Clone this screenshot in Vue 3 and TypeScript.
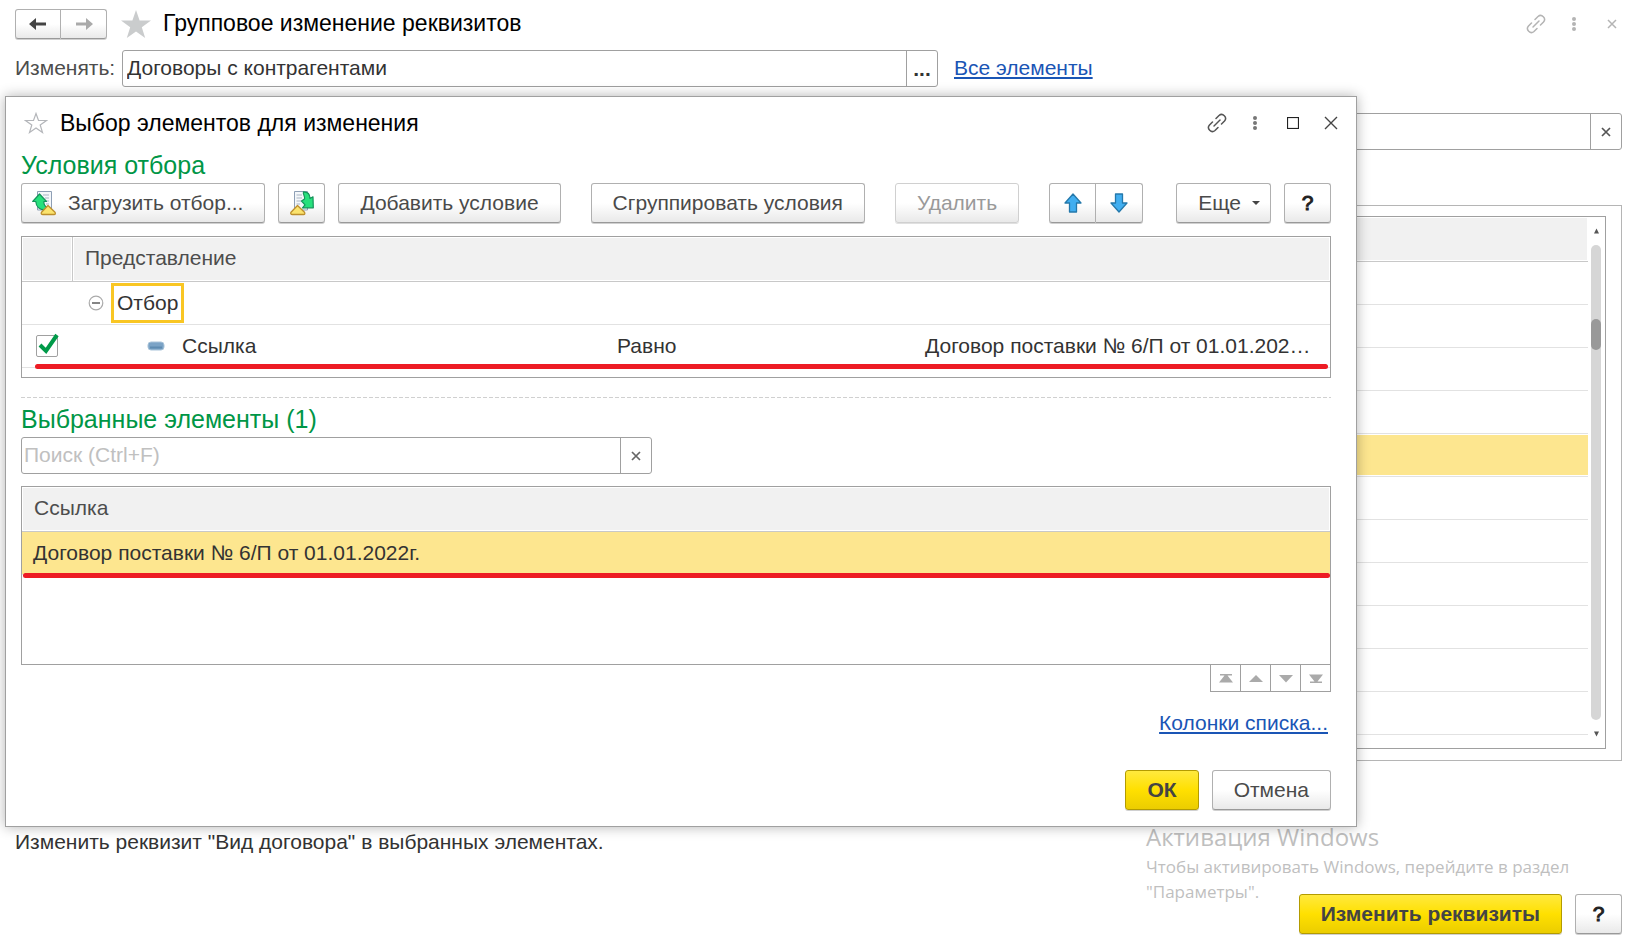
<script setup lang="ts">
import { ref } from 'vue'

const target = ref('Договоры с контрагентами')
const filterText = ref('')
const search = ref('')
const conditionOn = ref(true)
const backRows = Array.from({ length: 11 }, (_, i) => ({ id: i, selected: i === 4 }))
const selectedItems = ['Договор поставки № 6/П от 01.01.2022г.']
</script>

<template>
  <main class="page">
    <header class="topbar">
      <div class="btn-pair nav">
        <button class="btn" type="button" aria-label="Назад">
          <svg width="18" height="14" viewBox="0 0 18 14"><path d="M0 7 7 1V5.5H17V8.5H7V13Z" fill="#444" /></svg>
        </button>
        <button class="btn" type="button" aria-label="Вперед">
          <svg width="18" height="14" viewBox="0 0 18 14"><path d="M18 7 11 1V5.5H1V8.5H11V13Z" fill="#aaa" /></svg>
        </button>
      </div>
      <svg class="star" width="30" height="29" viewBox="0 0 30 29"><path d="M15 0 18.6 10.6H30L20.8 17.2 24.2 28 15 21.4 5.8 28 9.2 17.2 0 10.6H11.4Z" fill="#cacccd" /></svg>
      <h1 class="title">Групповое изменение реквизитов</h1>
      <div class="window-icons muted">
        <button type="button" aria-label="Ссылка на объект">
          <svg width="20" height="20" viewBox="0 0 20 20"><g fill="none" stroke="currentColor" stroke-width="1.5" stroke-linecap="round"><path d="M9 5.5 12 2.5A3.9 3.9 0 0 1 17.5 8L14.5 11" /><path d="M11 14.5 8 17.5A3.9 3.9 0 0 1 2.5 12L5.5 9" /><path d="M7 13 13 7" /></g></svg>
        </button>
        <button type="button" aria-label="Меню">
          <svg width="6" height="16" viewBox="0 0 6 16"><g fill="currentColor"><circle cx="3" cy="3" r="2" /><circle cx="3" cy="8" r="2" /><circle cx="3" cy="13" r="2" /></g></svg>
        </button>
        <button type="button" aria-label="Закрыть">
          <svg width="10" height="10" viewBox="0 0 10 10"><path d="M1 1 9 9M9 1 1 9" stroke="currentColor" stroke-width="1.5" /></svg>
        </button>
      </div>
    </header>

    <div class="target-row">
      <label for="target">Изменять:</label>
      <div class="field target-field">
        <input id="target" v-model="target" type="text" />
        <button type="button" aria-label="Выбрать"><b>...</b></button>
      </div>
      <a href="#">Все элементы</a>
    </div>

    <div class="field filter-field">
      <input v-model="filterText" type="text" aria-label="Фильтр" />
      <button type="button" aria-label="Очистить">
        <svg width="10" height="10" viewBox="0 0 10 10"><path d="M1 1 9 9M9 1 1 9" stroke="#555" stroke-width="1.7" /></svg>
      </button>
    </div>

    <section class="group">
      <div class="back-list">
        <table class="back-table">
          <thead><tr><th></th></tr></thead>
          <tbody>
            <tr v-for="row in backRows" :key="row.id"><td :class="{ selected: row.selected }"></td></tr>
          </tbody>
        </table>
        <div class="scroll">
          <svg width="5" height="6" viewBox="0 0 5 6"><path d="M2.500 .5 5 5.500H0Z" fill="#555" /></svg>
          <div class="track"><div class="thumb"></div></div>
          <svg width="5" height="6" viewBox="0 0 5 6"><path d="M2.500 5.500 5 .5H0Z" fill="#555" /></svg>
        </div>
      </div>
    </section>

    <p class="summary">Изменить реквизит "Вид договора" в выбранных элементах.</p>
    <footer class="footer">
      <button class="btn primary" type="button">Изменить реквизиты</button>
      <button class="btn help" type="button">?</button>
    </footer>

    <aside class="activation">
      <h2>Активация Windows</h2>
      <p>Чтобы активировать Windows, перейдите в раздел "Параметры".</p>
    </aside>

    <section class="dialog" role="dialog" aria-labelledby="dialog-title">
      <header class="dialog-head">
        <svg width="24" height="22" viewBox="0 0 24 22"><path d="M12 1.5 14.5 8.5H22.5L16.2 13 18.5 20.5 12 16 5.5 20.5 7.8 13 1.5 8.5H9.5Z" fill="#fff" stroke="#b4b6ba" stroke-width="1.2" /></svg>
        <h2 id="dialog-title" class="title">Выбор элементов для изменения</h2>
        <div class="window-icons">
          <button type="button" aria-label="Ссылка на объект">
            <svg width="20" height="20" viewBox="0 0 20 20"><g fill="none" stroke="#555" stroke-width="1.5" stroke-linecap="round"><path d="M9 5.5 12 2.5A3.9 3.9 0 0 1 17.5 8L14.5 11" /><path d="M11 14.5 8 17.5A3.9 3.9 0 0 1 2.5 12L5.5 9" /><path d="M7 13 13 7" /></g></svg>
          </button>
          <button type="button" aria-label="Меню">
            <svg width="6" height="16" viewBox="0 0 6 16"><g fill="#777"><circle cx="3" cy="3" r="2" /><circle cx="3" cy="8" r="2" /><circle cx="3" cy="13" r="2" /></g></svg>
          </button>
          <button type="button" aria-label="Развернуть">
            <svg width="12" height="12" viewBox="0 0 12 12"><rect x=".5" y=".5" width="11" height="11" fill="none" stroke="#222" stroke-width="1.2" /></svg>
          </button>
          <button type="button" aria-label="Закрыть">
            <svg width="14" height="14" viewBox="0 0 14 14"><path d="M1 1 13 13M13 1 1 13" stroke="#444" stroke-width="1.4" /></svg>
          </button>
        </div>
      </header>

      <h3 class="section-title">Условия отбора</h3>
      <div class="toolbar">
        <button class="btn load" type="button">
          <svg width="24" height="25" viewBox="0 0 24 25">
            <path d="M5.5 .5H19.5V19H5.5Z" fill="#f4f7fa" stroke="#8e9fb5" />
            <path d="M11 4H17M13 7H17M14 10H17M14 13H17" stroke="#a9b5c4" />
            <path d="M7.5 3 14.5 10.5H11.8C11.8 13.5 12.5 15.5 15.5 16.5L13 18.8C8 18.8 4 16 3.8 10.5H.7Z" fill="#27e07c" stroke="#14935a" stroke-width="1.2" stroke-linejoin="round" />
            <path d="M16 14.5 23 21.2Q24 23.5 22 23.5H11Q8.500 23.5 9.500 21.2Z" fill="#fbe36d" stroke="#bd8f2d" stroke-width="1.3" stroke-linejoin="round" />
          </svg>
          <span>Загрузить отбор...</span>
        </button>
        <button class="btn square" type="button" aria-label="Сохранить отбор">
          <svg width="24" height="25" viewBox="0 0 24 25">
            <path d="M4.5 .5H17.5V19H4.5Z" fill="#f4f7fa" stroke="#8e9fb5" />
            <path d="M6.5 4H12M6.5 7H12M6.5 10H11M6.5 13H10" stroke="#a9b5c4" />
            <path d="M13.500 .8C18 .8 20 3.500 20 7.500L23 5.800 23.300 16.800H12.500L15 13.800 11.500 10 14.500 8C15.500 5.500 12.500 3.500 13.500 .8Z" fill="#27e07c" stroke="#14935a" stroke-width="1.2" stroke-linejoin="round" />
            <path d="M7.5 14.5 14.500 21.2Q15.500 23.5 13.500 23.5H2.5Q0 23.5 1 21.2Z" fill="#fbe36d" stroke="#bd8f2d" stroke-width="1.3" stroke-linejoin="round" />
          </svg>
        </button>
        <button class="btn" type="button">Добавить условие</button>
        <button class="btn apart" type="button">Сгруппировать условия</button>
        <button class="btn apart" type="button" disabled>Удалить</button>
        <div class="btn-pair apart">
          <button class="btn square" type="button" aria-label="Вверх">
            <svg width="18" height="20" viewBox="0 0 18 20"><path d="M9 1 17 10H12.5V19H5.5V10H1Z" fill="#41aef0" stroke="#2478ab" stroke-width="1.3" stroke-linejoin="round" /></svg>
          </button>
          <button class="btn square" type="button" aria-label="Вниз">
            <svg width="18" height="20" viewBox="0 0 18 20"><path d="M9 19 17 10H12.5V1H5.5V10H1Z" fill="#41aef0" stroke="#2478ab" stroke-width="1.3" stroke-linejoin="round" /></svg>
          </button>
        </div>
        <button class="btn more" type="button">
          <span>Еще</span>
          <svg width="8" height="4" viewBox="0 0 8 4"><path d="M0 0H8L4 4Z" fill="#444" /></svg>
        </button>
        <button class="btn help" type="button">?</button>
      </div>

      <div class="grid-box conditions">
        <table>
          <colgroup><col class="c-check" /><col class="c-name" /><col class="c-kind" /><col /></colgroup>
          <thead>
            <tr><th></th><th colspan="3" class="split">Представление</th></tr>
          </thead>
          <tbody>
            <tr>
              <td></td>
              <td colspan="3">
                <div class="tree-root">
                  <svg width="16" height="16" viewBox="0 0 16 16"><circle cx="8" cy="8" r="6.8" fill="#fff" stroke="#aaa" stroke-width="1.2" /><path d="M4 8H12" stroke="#666" stroke-width="1.6" /></svg>
                  <span class="marked">Отбор</span>
                </div>
              </td>
            </tr>
            <tr>
              <td>
                <label class="check">
                  <input v-model="conditionOn" type="checkbox" aria-label="Использовать условие" />
                  <svg v-if="conditionOn" width="22" height="22" viewBox="0 0 22 22"><path d="M2 12 8 18 19 2" fill="none" stroke="#009a49" stroke-width="4" /></svg>
                </label>
              </td>
              <td>
                <div class="tree-leaf">
                  <svg width="18" height="10" viewBox="0 0 18 10"><rect x="1" y="1" width="16" height="8" rx="3" fill="#7ba3c6" stroke="#a9c3d9" /><path d="M3 6.5H15" stroke="#5e8bb1" stroke-width="2" /></svg>
                  <span>Ссылка</span>
                </div>
              </td>
              <td class="plain">Равно</td>
              <td class="plain">Договор поставки № 6/П от 01.01.202…</td>
            </tr>
          </tbody>
        </table>
        <div class="underline"></div>
      </div>

      <hr class="divider" />

      <h3 class="section-title">Выбранные элементы (1)</h3>
      <div class="field search-field">
        <input v-model="search" type="text" placeholder="Поиск (Ctrl+F)" aria-label="Поиск" />
        <button type="button" aria-label="Очистить">
          <svg width="10" height="10" viewBox="0 0 10 10"><path d="M1 1 9 9M9 1 1 9" stroke="#666" stroke-width="1.7" /></svg>
        </button>
      </div>

      <div class="grid-box items">
        <table>
          <thead><tr><th>Ссылка</th></tr></thead>
          <tbody>
            <tr v-for="item in selectedItems" :key="item">
              <td class="selected">{{ item }}<div class="underline"></div></td>
            </tr>
          </tbody>
        </table>
      </div>
      <div class="pager">
        <button type="button" aria-label="В начало"><svg width="14" height="9" viewBox="0 0 14 9"><path d="M1 0H13V1.5H8.5L14 8.5H0L5.5 1.5H1Z" fill="#aaa" /></svg></button>
        <button type="button" aria-label="Выше"><svg width="14" height="9" viewBox="0 0 14 9"><path d="M7 1 14 8H0Z" fill="#aaa" /></svg></button>
        <button type="button" aria-label="Ниже"><svg width="14" height="9" viewBox="0 0 14 9"><path d="M7 8.5 14 1H0Z" fill="#aaa" /></svg></button>
        <button type="button" aria-label="В конец"><svg width="14" height="9" viewBox="0 0 14 9"><path d="M1 9H13V7.5H8.5L14 .5H0L5.5 7.5H1Z" fill="#aaa" /></svg></button>
      </div>

      <div class="columns-link"><a href="#">Колонки списка...</a></div>
      <div class="actions">
        <button class="btn primary" type="button">ОК</button>
        <button class="btn" type="button">Отмена</button>
      </div>
    </section>
  </main>
</template>

<style>
body {
  margin: 0;
  background: #fff;
}
</style>

<style scoped>
.page,
.page * {
  box-sizing: border-box;
}
.page {
  position: relative;
  display: flex;
  flex-direction: column;
  min-height: 100vh;
  padding: 9px 20px 17px 15px;
  overflow: hidden;
  color: #333;
  font: 21px/24px "Liberation Sans", Arial, sans-serif;
}
button,
input {
  font: inherit;
  color: inherit;
}
button {
  padding: 0;
  border: 0;
  background: none;
}
svg {
  display: block;
  flex: none;
}
h1, h2, h3, p {
  margin: 0;
  font-weight: normal;
}
a {
  color: #1a55b5;
  text-decoration-thickness: 2px;
  text-underline-offset: 2px;
}
.title {
  flex: 1;
  color: #000;
  font-size: 23px;
  line-height: 28px;
}

.btn {
  display: flex;
  align-items: center;
  justify-content: center;
  height: 40px;
  padding: 0 21px;
  border: 1px solid #b0b0b0;
  border-bottom-color: #999;
  border-radius: 3px;
  background: linear-gradient(#fff 50%, #e9e9e9);
  box-shadow: 0 1px #d0d0d0;
  color: #4a4a4a;
  white-space: nowrap;
}
.btn:disabled {
  border-color: #d0d0d0;
  box-shadow: 0 1px #e0e0e0;
  color: #999;
}
.btn.square,
.btn.help {
  width: 47px;
  padding: 0;
}
.btn.help {
  color: #222;
  -webkit-text-stroke: 1px #222;
}
.btn.primary {
  border-color: #b39b00;
  background: linear-gradient(#ffe93e, #ffe000 50%, #ebcd00);
  color: #444;
  font-weight: bold;
}
.btn-pair {
  display: flex;
}
.btn-pair .btn:first-child {
  border-radius: 3px 0 0 3px;
}
.btn-pair .btn:last-child {
  border-left: 0;
  border-radius: 0 3px 3px 0;
}
.nav .btn {
  width: 46px;
  height: 30px;
  padding: 0;
}

.topbar {
  display: flex;
  align-items: center;
  height: 30px;
}
.topbar .title {
  padding-bottom: 2px;
}
.star {
  margin: 0 12px 0 14px;
}
.window-icons {
  display: flex;
  align-items: center;
}
.window-icons button {
  display: flex;
  align-items: center;
  justify-content: center;
  width: 38px;
  height: 28px;
}
.muted {
  margin-right: -9px;
  color: #b4b4b4;
}

.field {
  display: flex;
  height: 37px;
  border: 1px solid #a0a0a0;
  border-radius: 3px;
  background: #fff;
}
.field input {
  flex: 1;
  min-width: 0;
  padding: 0 4px 2px;
  border: 0;
  outline: 0;
  background: none;
}
.field input::placeholder {
  color: #c0c0c0;
  opacity: 1;
}
.field button {
  display: flex;
  align-items: center;
  justify-content: center;
  width: 31px;
  border-left: 1px solid #a0a0a0;
}
.target-row {
  display: flex;
  align-items: center;
  margin-top: 11px;
}
.target-row label,
.target-row a {
  padding-bottom: 2px;
}
.target-row label {
  width: 107px;
  color: #4d4d4d;
}
.target-field {
  flex: 0 1 816px;
  margin-right: 16px;
}
.filter-field {
  margin-top: 26px;
}

.group {
  margin-top: 55px;
  padding: 10px 15px 11px;
  border: 1px solid #b5b5b5;
}
.back-list {
  display: flex;
  height: 533px;
  border: 1px solid #a0a0a0;
}
.back-table {
  flex: 1;
  border-collapse: separate;
  border-spacing: 0;
  height: 0;
}
.back-table th {
  height: 45px;
  padding: 0;
  border-bottom: 1px solid #c8c8c8;
  background: #f1f1f1;
  box-shadow: inset 0 0 0 1px #fff;
}
.back-table td {
  height: 43px;
  padding: 0;
  border-bottom: 1px solid #e2e2e2;
}
.back-table td.selected {
  background: #fde68f;
  box-shadow: inset 0 1px #fff, inset 0 -1px #fff;
}
.scroll {
  display: flex;
  flex-direction: column;
  align-items: center;
  gap: 11px;
  width: 17px;
  padding: 11px 1px 11px 0;
}
.track {
  flex: 1;
  width: 10px;
  padding-top: 74px;
  border-radius: 5px;
  background: #d6d6d6;
}
.thumb {
  height: 31px;
  border-radius: 5px;
  background: #999;
}

.summary {
  margin-top: 69px;
}
.footer {
  display: flex;
  justify-content: flex-end;
  gap: 13px;
  margin-top: auto;
}
.activation {
  position: absolute;
  right: 70px;
  bottom: 47px;
  width: 426px;
  color: #bfbfbf;
  font: 17px/25px "Open Sans", "Noto Sans", sans-serif;
}
.activation h2 {
  font-size: 24px;
  line-height: 34px;
}

.dialog {
  position: absolute;
  top: 96px;
  right: 285px;
  left: 5px;
  padding: 12px 25px 16px 15px;
  border: 1px solid #a0a0a0;
  background: #fff;
  box-shadow: 0 0 12px rgba(0, 0, 0, 0.3);
}
.dialog-head {
  display: flex;
  align-items: center;
  gap: 12px;
  height: 28px;
  padding-left: 3px;
}
.dialog-head .window-icons {
  margin-right: -19px;
}
.section-title {
  color: #009646;
  font-size: 25px;
  line-height: 28px;
}
.dialog-head + .section-title {
  margin-top: 14px;
}
.toolbar {
  display: flex;
  gap: 13px;
  margin-top: 4px;
}
.toolbar .apart {
  margin-left: 17px;
}
.load {
  gap: 12px;
  padding: 0 21px 0 10px;
}
.more {
  gap: 11px;
  margin-left: auto;
  padding: 0 10px 0 21px;
}

.grid-box {
  position: relative;
  border: 1px solid #a0a0a0;
}
.grid-box table {
  width: 100%;
  border-collapse: separate;
  border-spacing: 0;
  table-layout: fixed;
}
.grid-box th {
  height: 45px;
  padding: 0 12px 2px;
  border-bottom: 1px solid #c8c8c8;
  background: #f1f1f1;
  box-shadow: inset 0 0 0 1px #fff;
  color: #4d4d4d;
  font-weight: normal;
  text-align: left;
}
.grid-box th.split {
  border-left: 1px solid #c8c8c8;
}
.grid-box td {
  height: 43px;
  padding: 0;
  border-bottom: 1px solid #e2e2e2;
  white-space: nowrap;
}
.conditions {
  margin-top: 13px;
  padding-bottom: 9px;
}
.c-check {
  width: 50px;
}
.c-name {
  width: 533px;
}
.c-kind {
  width: 308px;
}
.grid-box td.plain {
  padding-left: 12px;
}
.tree-root {
  display: flex;
  align-items: center;
  gap: 7px;
  padding-left: 16px;
}
.marked {
  padding: 5px 3px;
  border: 3px solid #f9c623;
}
.tree-leaf {
  display: flex;
  align-items: center;
  gap: 17px;
  padding-left: 75px;
}
.check {
  display: block;
  position: relative;
  width: 22px;
  height: 22px;
  margin-left: 14px;
}
.check input {
  display: block;
  width: 22px;
  height: 22px;
  margin: 0;
  border: 1px solid #a0a0a0;
  border-radius: 2px;
  background: #fff;
  appearance: none;
}
.check svg {
  position: absolute;
  top: -2px;
  left: 2px;
}
.underline {
  position: absolute;
  right: 2px;
  bottom: 8px;
  left: 13px;
  height: 5px;
  border-radius: 3px;
  background: #ed1c24;
}
.divider {
  height: 1px;
  margin: 19px 0 7px;
  border: 0;
  background: repeating-linear-gradient(90deg, #d0d0d0 0 4px, #fff 4px 6px);
}
.search-field {
  width: 631px;
  max-width: 100%;
  margin-top: 4px;
}
.search-field input {
  padding: 0 2px 2px;
}
.items {
  min-height: 179px;
  margin-top: 12px;
}
.grid-box td.selected {
  position: relative;
  padding: 0 11px;
  background: #fde68f;
}
.selected .underline {
  right: 0;
  bottom: -4px;
  left: 1px;
}
.pager {
  display: flex;
  justify-content: flex-end;
}
.pager button {
  display: flex;
  align-items: center;
  justify-content: center;
  width: 30px;
  height: 27px;
  border: 1px solid #a0a0a0;
  border-width: 0 1px 1px 0;
}
.pager button:first-child {
  width: 31px;
  border-left-width: 1px;
}
.columns-link {
  margin: 19px 3px 0 0;
  text-align: right;
}
.actions {
  display: flex;
  justify-content: flex-end;
  gap: 13px;
  margin-top: 35px;
}
</style>
